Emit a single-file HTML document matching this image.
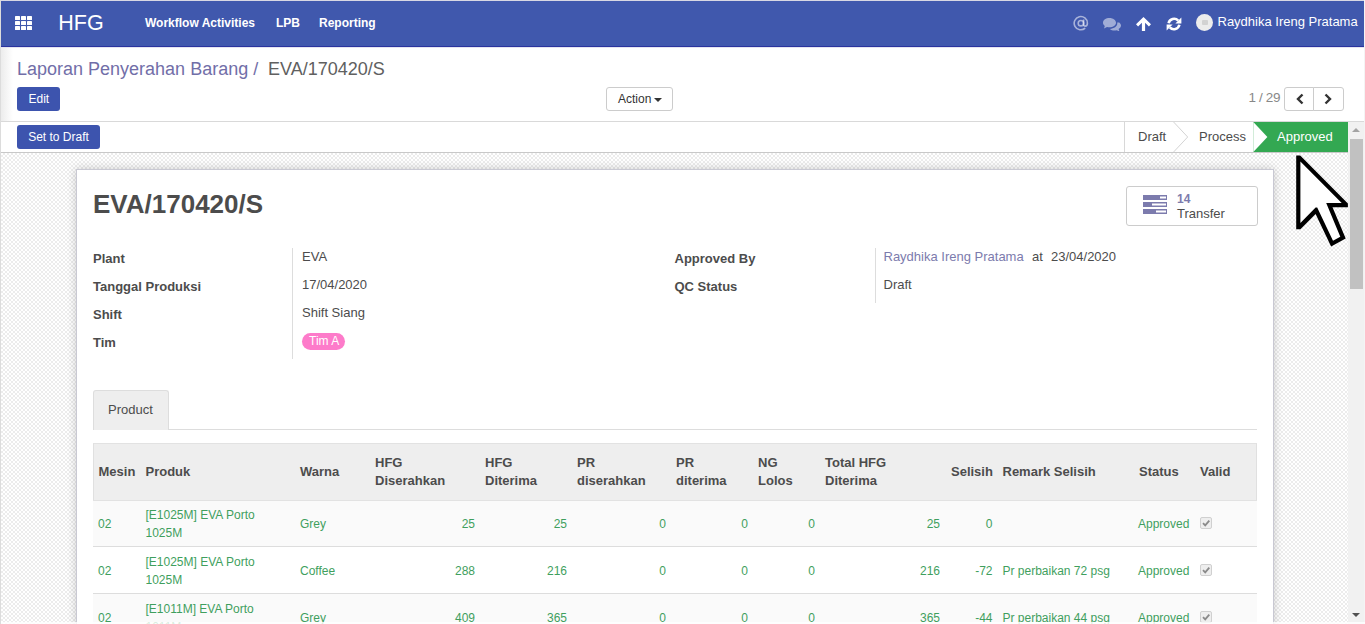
<!DOCTYPE html><html><head><meta charset="utf-8"><style>
*{margin:0;padding:0;box-sizing:border-box}
html,body{width:1365px;height:624px;overflow:hidden;background:#fff;font-family:"Liberation Sans",sans-serif;color:#4c4c4c;position:relative}
.a{position:absolute;white-space:nowrap}
.r{position:absolute}
</style></head><body>
<div class="r" style="left:0;top:0;width:1365px;height:1px;background:#d8d8e4"></div><div class="r" style="left:0;top:0;width:1px;height:624px;background:#dcdcdc"></div><div class="r" style="left:1px;top:1px;width:1363px;height:45px;background:#4058ad"></div><div class="r" style="left:1px;top:46px;width:1363px;height:1px;background:#2a339e"></div><div class="r" style="left:1px;top:47px;width:1363px;height:1px;background:#e4e4f0"></div><svg class="a" style="left:15px;top:16px" width="17" height="14" viewBox="0 0 17 14"><g fill="#fff">
<rect x="0" y="0" width="5" height="4" rx=".6"/><rect x="6" y="0" width="5" height="4" rx=".6"/><rect x="12" y="0" width="5" height="4" rx=".6"/>
<rect x="0" y="5" width="5" height="4" rx=".6"/><rect x="6" y="5" width="5" height="4" rx=".6"/><rect x="12" y="5" width="5" height="4" rx=".6"/>
<rect x="0" y="10" width="5" height="4" rx=".6"/><rect x="6" y="10" width="5" height="4" rx=".6"/><rect x="12" y="10" width="5" height="4" rx=".6"/></g></svg><div class="a" style="left:58.3px;top:12.60px;font-size:21.5px;line-height:21.5px;color:#fff;">HFG</div>
<div class="a" style="left:145px;top:17.34px;font-size:12px;line-height:12px;font-weight:bold;color:#fff;">Workflow Activities</div>
<div class="a" style="left:276px;top:17.34px;font-size:12px;line-height:12px;font-weight:bold;color:#fff;">LPB</div>
<div class="a" style="left:319px;top:17.34px;font-size:12px;line-height:12px;font-weight:bold;color:#fff;">Reporting</div>
<div class="a" style="left:1217.5px;top:14.60px;font-size:13px;line-height:13px;color:#fff;">Raydhika Ireng Pratama</div>
<svg class="a" style="left:1073px;top:15.4px" width="16" height="16" viewBox="0 0 16 16"><g fill="none" stroke="rgba(255,255,255,.55)" stroke-width="1.6">
<path d="M12.2 13.1 A6.6 6.6 0 1 1 14.4 8.2 C14.4 10.2 13.4 11.1 12.3 11.1 C11.2 11.1 10.6 10.4 10.6 9.3 V4.6"/>
<circle cx="7.9" cy="8.2" r="2.7"/></g></svg><svg class="a" style="left:1103px;top:18px" width="18" height="13" viewBox="0 0 18 13"><g fill="rgba(255,255,255,.5)">
<path d="M6.5 0C2.9 0 0 2.1 0 4.7c0 1.3.7 2.4 1.8 3.2L1 10.5l3-1.6c.8.2 1.6.4 2.5.4 3.6 0 6.5-2.1 6.5-4.6S10.1 0 6.5 0z"/>
<path d="M14.2 4.5c.1.3.1.5.1.8 0 3.1-3.3 5.5-7.4 5.6 1.1 1 2.7 1.6 4.6 1.6.7 0 1.4-.1 2-.3l2.9 1.1-.8-2.3c1.4-.8 2.4-2 2.4-3.4 0-1.2-.7-2.3-1.8-3.1z"/></g></svg><svg class="a" style="left:1136px;top:17px" width="15" height="14" viewBox="0 0 15 14"><path fill="#fff" d="M7.5 0L0 7.3l2.1 2.1 3.8-3.7V14h3.2V5.7l3.8 3.7L15 7.3z"/></svg><svg class="a" style="left:1166px;top:17px" width="16" height="14" viewBox="0 0 16 14"><g fill="none" stroke="#fff" stroke-width="2.6">
<path d="M2.6 6.2 A5.6 5.6 0 0 1 12.2 3.6"/><path d="M13.4 7.8 A5.6 5.6 0 0 1 3.8 10.4"/></g>
<g fill="#fff"><path d="M15.4 0.6 V6.6 H9.4 Z"/><path d="M0.6 13.4 V7.4 H6.6 Z"/></g></svg><div class="r" style="left:1196px;top:14px;width:17px;height:17px;border-radius:50%;background:#ececec"></div><div class="r" style="left:1201.5px;top:20px;width:6px;height:5px;border-radius:1px;background:#d2d2d2"></div><div class="r" style="left:1px;top:48px;width:12px;height:73px;background:linear-gradient(90deg,#ececec,#fff)"></div><div class="r" style="left:1px;top:121px;width:1363px;height:1px;background:#d9d9d9"></div><div class="a" style="left:17px;top:60.26px;font-size:18px;line-height:18px;color:#716ea8;">Laporan Penyerahan Barang /</div>
<div class="a" style="left:268px;top:60.26px;font-size:18px;line-height:18px;color:#606060;">EVA/170420/S</div>
<div class="r" style="left:17px;top:87px;width:43px;height:24px;background:#3d54ae;border-radius:3px"></div><div class="a" style="left:-161.2px;width:400px;text-align:center;top:93.14px;font-size:12px;line-height:12px;color:#fff;">Edit</div>
<div class="r" style="left:606px;top:87px;width:67px;height:24px;border:1px solid #ccc;border-radius:3px;background:#fff"></div><div class="a" style="left:618px;top:93.14px;font-size:12px;line-height:12px;color:#333;">Action</div>
<div class="r" style="left:654px;top:98px;width:0;height:0;border-left:4px solid transparent;border-right:4px solid transparent;border-top:4px solid #333"></div><div class="a" style="left:1248.5px;top:90.57px;font-size:13.5px;line-height:13.5px;color:#888;letter-spacing:-0.35px">1 / 29</div>
<div class="r" style="left:1284px;top:87px;width:30px;height:24px;border:1px solid #ccc;border-radius:3px 0 0 3px;background:#fff"></div><div class="r" style="left:1313px;top:87px;width:31px;height:24px;border:1px solid #ccc;border-radius:0 3px 3px 0;background:#fff"></div><svg class="a" style="left:1295px;top:93px" width="10" height="12" viewBox="0 0 10 12"><path d="M7.5 1.5L3 6l4.5 4.5" fill="none" stroke="#333" stroke-width="2.4"/></svg><svg class="a" style="left:1323px;top:93px" width="10" height="12" viewBox="0 0 10 12"><path d="M2.5 1.5L7 6l-4.5 4.5" fill="none" stroke="#333" stroke-width="2.4"/></svg><div class="r" style="left:1px;top:152px;width:1347px;height:1px;background:#c8c8c8"></div><div class="r" style="left:17px;top:125px;width:83px;height:24px;background:#3d54ae;border-radius:3px"></div><div class="a" style="left:-141.5px;width:400px;text-align:center;top:131.14px;font-size:12px;line-height:12px;color:#fff;">Set to Draft</div>
<svg class="a" style="left:1123px;top:122px" width="225" height="30" viewBox="0 0 225 30">
<rect x="130.3" y="0" width="94.7" height="30" fill="#33a852"/>
<path d="M130.3 0 L144.4 15 L130.3 30" fill="#fff"/>
<path d="M1.5 0 V30" stroke="#d8d8d8" stroke-width="1" fill="none"/>
<path d="M50.6 0 L64.7 15 L50.6 30" stroke="#d4d4d4" stroke-width="1" fill="none"/>
</svg><div class="a" style="left:1138px;top:130.00px;font-size:13px;line-height:13px;color:#4c4c4c;">Draft</div>
<div class="a" style="left:1199px;top:130.00px;font-size:13px;line-height:13px;color:#4c4c4c;">Process</div>
<div class="a" style="left:1277px;top:130.00px;font-size:13px;line-height:13px;color:#fff;">Approved</div>
<div class="r" style="left:1px;top:153px;width:1347px;height:471px;background-color:#fff;
background-image:linear-gradient(45deg,#ececec 25%,transparent 25%,transparent 75%,#ececec 75%),linear-gradient(45deg,#ececec 25%,transparent 25%,transparent 75%,#ececec 75%);
background-size:4px 4px;background-position:0 0,2px 2px"></div><div class="r" style="left:76px;top:169px;width:1198px;height:470px;background:#fff;border:1px solid #c9c9d3;box-shadow:0 0 9px rgba(0,0,0,.2)"></div><div class="a" style="left:93px;top:190.99px;font-size:26px;line-height:26px;font-weight:bold;color:#4c4c4c;">EVA/170420/S</div>
<div class="r" style="left:1126px;top:186px;width:132px;height:40px;border:1px solid #ccc;border-radius:3px;background:#fff"></div><svg class="a" style="left:1143px;top:195px" width="25" height="20" viewBox="0 0 25 20"><g fill="#7c7bad">
<rect x="0" y="0" width="24" height="5"/><rect x="0" y="7" width="24" height="5"/><rect x="0" y="14" width="24" height="5"/></g>
<g fill="#fff"><rect x="17" y="1.5" width="6" height="2"/><rect x="9" y="8.5" width="14" height="2"/><rect x="13" y="15.5" width="10" height="2"/></g></svg><div class="a" style="left:1177px;top:193.34px;font-size:12px;line-height:12px;font-weight:bold;color:#7c7bad;">14</div>
<div class="a" style="left:1177px;top:206.80px;font-size:13px;line-height:13px;color:#4c4c4c;">Transfer</div>
<div class="a" style="left:93px;top:252.00px;font-size:13px;line-height:13px;font-weight:bold;color:#4c4c4c;">Plant</div>
<div class="a" style="left:93px;top:280.00px;font-size:13px;line-height:13px;font-weight:bold;color:#4c4c4c;">Tanggal Produksi</div>
<div class="a" style="left:93px;top:308.00px;font-size:13px;line-height:13px;font-weight:bold;color:#4c4c4c;">Shift</div>
<div class="a" style="left:93px;top:336.00px;font-size:13px;line-height:13px;font-weight:bold;color:#4c4c4c;">Tim</div>
<div class="r" style="left:292px;top:248px;width:1px;height:111px;background:#ddd"></div><div class="a" style="left:302px;top:250.00px;font-size:13px;line-height:13px;color:#4c4c4c;">EVA</div>
<div class="a" style="left:302px;top:278.00px;font-size:13px;line-height:13px;color:#4c4c4c;">17/04/2020</div>
<div class="a" style="left:302px;top:306.00px;font-size:13px;line-height:13px;color:#4c4c4c;">Shift Siang</div>
<div class="r" style="left:302px;top:333px;width:43px;height:17px;border-radius:9px;background:#fd7bca"></div><div class="a" style="left:309px;top:334.84px;font-size:12px;line-height:12px;color:#fff;">Tim A</div>
<div class="a" style="left:674.5px;top:251.70px;font-size:13px;line-height:13px;font-weight:bold;color:#4c4c4c;">Approved By</div>
<div class="a" style="left:674.5px;top:279.70px;font-size:13px;line-height:13px;font-weight:bold;color:#4c4c4c;">QC Status</div>
<div class="r" style="left:875px;top:248px;width:1px;height:55px;background:#ddd"></div><div class="a" style="left:883.5px;top:249.70px;font-size:13px;line-height:13px;color:#7c7bad;">Raydhika Ireng Pratama</div>
<div class="a" style="left:1032px;top:249.70px;font-size:13px;line-height:13px;color:#4c4c4c;">at</div>
<div class="a" style="left:1051px;top:249.70px;font-size:13px;line-height:13px;color:#4c4c4c;">23/04/2020</div>
<div class="a" style="left:883.5px;top:277.70px;font-size:13px;line-height:13px;color:#4c4c4c;">Draft</div>
<div class="r" style="left:93px;top:429px;width:1164px;height:1px;background:#ddd"></div><div class="r" style="left:93px;top:390px;width:76px;height:40px;background:#eee;border:1px solid #ddd;border-bottom:none;border-radius:3px 3px 0 0"></div><div class="a" style="left:108px;top:403.00px;font-size:13px;line-height:13px;color:#4c4c4c;">Product</div>
<div class="r" style="left:93px;top:443px;width:1164px;height:57px;background:#eee;border-top:1px solid #e2e2e2;border-left:1px solid #e0e0e0;border-right:1px solid #e0e0e0"></div><div class="a" style="left:98.5px;top:465.00px;font-size:13px;line-height:13px;font-weight:bold;color:#4c4c4c;">Mesin</div>
<div class="a" style="left:145.5px;top:465.00px;font-size:13px;line-height:13px;font-weight:bold;color:#4c4c4c;">Produk</div>
<div class="a" style="left:300px;top:465.00px;font-size:13px;line-height:13px;font-weight:bold;color:#4c4c4c;">Warna</div>
<div class="a" style="left:951px;top:465.00px;font-size:13px;line-height:13px;font-weight:bold;color:#4c4c4c;">Selisih</div>
<div class="a" style="left:1002.5px;top:465.00px;font-size:13px;line-height:13px;font-weight:bold;color:#4c4c4c;">Remark Selisih</div>
<div class="a" style="left:1139px;top:465.00px;font-size:13px;line-height:13px;font-weight:bold;color:#4c4c4c;">Status</div>
<div class="a" style="left:1200px;top:465.00px;font-size:13px;line-height:13px;font-weight:bold;color:#4c4c4c;">Valid</div>
<div class="a" style="left:375px;top:456.00px;font-size:13px;line-height:13px;font-weight:bold;color:#4c4c4c;">HFG</div>
<div class="a" style="left:375px;top:474.00px;font-size:13px;line-height:13px;font-weight:bold;color:#4c4c4c;">Diserahkan</div>
<div class="a" style="left:485px;top:456.00px;font-size:13px;line-height:13px;font-weight:bold;color:#4c4c4c;">HFG</div>
<div class="a" style="left:485px;top:474.00px;font-size:13px;line-height:13px;font-weight:bold;color:#4c4c4c;">Diterima</div>
<div class="a" style="left:577px;top:456.00px;font-size:13px;line-height:13px;font-weight:bold;color:#4c4c4c;">PR</div>
<div class="a" style="left:577px;top:474.00px;font-size:13px;line-height:13px;font-weight:bold;color:#4c4c4c;">diserahkan</div>
<div class="a" style="left:676px;top:456.00px;font-size:13px;line-height:13px;font-weight:bold;color:#4c4c4c;">PR</div>
<div class="a" style="left:676px;top:474.00px;font-size:13px;line-height:13px;font-weight:bold;color:#4c4c4c;">diterima</div>
<div class="a" style="left:758px;top:456.00px;font-size:13px;line-height:13px;font-weight:bold;color:#4c4c4c;">NG</div>
<div class="a" style="left:758px;top:474.00px;font-size:13px;line-height:13px;font-weight:bold;color:#4c4c4c;">Lolos</div>
<div class="a" style="left:825px;top:456.00px;font-size:13px;line-height:13px;font-weight:bold;color:#4c4c4c;">Total HFG</div>
<div class="a" style="left:825px;top:474.00px;font-size:13px;line-height:13px;font-weight:bold;color:#4c4c4c;">Diterima</div>
<div class="r" style="left:93px;top:500px;width:1164px;height:1px;background:#e2e2e2;z-index:1"></div><div class="r" style="left:93px;top:500px;width:1164px;height:47px;background:#fafafa"></div><div class="r" style="left:93px;top:546px;width:1164px;height:1px;background:#ddd"></div><div class="a" style="left:98px;top:517.84px;font-size:12px;line-height:12px;color:#3f9f5e;">02</div>
<div class="a" style="left:145.5px;top:509.34px;font-size:12px;line-height:12px;color:#3f9f5e;">[E1025M] EVA Porto</div>
<div class="a" style="left:145.5px;top:527.34px;font-size:12px;line-height:12px;color:#3f9f5e;">1025M</div>
<div class="a" style="left:300px;top:517.84px;font-size:12px;line-height:12px;color:#3f9f5e;">Grey</div>
<div class="a" style="right:890px;top:517.84px;font-size:12px;line-height:12px;color:#3f9f5e;">25</div>
<div class="a" style="right:798px;top:517.84px;font-size:12px;line-height:12px;color:#3f9f5e;">25</div>
<div class="a" style="right:699px;top:517.84px;font-size:12px;line-height:12px;color:#3f9f5e;">0</div>
<div class="a" style="right:617px;top:517.84px;font-size:12px;line-height:12px;color:#3f9f5e;">0</div>
<div class="a" style="right:550px;top:517.84px;font-size:12px;line-height:12px;color:#3f9f5e;">0</div>
<div class="a" style="right:425px;top:517.84px;font-size:12px;line-height:12px;color:#3f9f5e;">25</div>
<div class="a" style="right:372.5px;top:517.84px;font-size:12px;line-height:12px;color:#3f9f5e;">0</div>
<div class="a" style="left:1138px;top:517.84px;font-size:12px;line-height:12px;color:#3f9f5e;">Approved</div>
<div class="r" style="left:1200px;top:517px;width:12px;height:12px;border:1px solid #d0d0d0;border-radius:2px;background:#eee"></div><svg class="a" style="left:1201px;top:518px" width="10" height="10" viewBox="0 0 10 10"><path d="M2 5.2l2.2 2.2L8.3 2.6" fill="none" stroke="#8a8a8a" stroke-width="1.8"/></svg><div class="r" style="left:93px;top:547px;width:1164px;height:47px;background:#fff"></div><div class="r" style="left:93px;top:593px;width:1164px;height:1px;background:#ddd"></div><div class="a" style="left:98px;top:564.84px;font-size:12px;line-height:12px;color:#3f9f5e;">02</div>
<div class="a" style="left:145.5px;top:556.34px;font-size:12px;line-height:12px;color:#3f9f5e;">[E1025M] EVA Porto</div>
<div class="a" style="left:145.5px;top:574.34px;font-size:12px;line-height:12px;color:#3f9f5e;">1025M</div>
<div class="a" style="left:300px;top:564.84px;font-size:12px;line-height:12px;color:#3f9f5e;">Coffee</div>
<div class="a" style="right:890px;top:564.84px;font-size:12px;line-height:12px;color:#3f9f5e;">288</div>
<div class="a" style="right:798px;top:564.84px;font-size:12px;line-height:12px;color:#3f9f5e;">216</div>
<div class="a" style="right:699px;top:564.84px;font-size:12px;line-height:12px;color:#3f9f5e;">0</div>
<div class="a" style="right:617px;top:564.84px;font-size:12px;line-height:12px;color:#3f9f5e;">0</div>
<div class="a" style="right:550px;top:564.84px;font-size:12px;line-height:12px;color:#3f9f5e;">0</div>
<div class="a" style="right:425px;top:564.84px;font-size:12px;line-height:12px;color:#3f9f5e;">216</div>
<div class="a" style="right:372.5px;top:564.84px;font-size:12px;line-height:12px;color:#3f9f5e;">-72</div>
<div class="a" style="left:1002.5px;top:564.84px;font-size:12px;line-height:12px;color:#3f9f5e;">Pr perbaikan 72 psg</div>
<div class="a" style="left:1138px;top:564.84px;font-size:12px;line-height:12px;color:#3f9f5e;">Approved</div>
<div class="r" style="left:1200px;top:564px;width:12px;height:12px;border:1px solid #d0d0d0;border-radius:2px;background:#eee"></div><svg class="a" style="left:1201px;top:565px" width="10" height="10" viewBox="0 0 10 10"><path d="M2 5.2l2.2 2.2L8.3 2.6" fill="none" stroke="#8a8a8a" stroke-width="1.8"/></svg><div class="r" style="left:93px;top:594px;width:1164px;height:47px;background:#fafafa"></div><div class="r" style="left:93px;top:640px;width:1164px;height:1px;background:#ddd"></div><div class="a" style="left:98px;top:611.84px;font-size:12px;line-height:12px;color:#3f9f5e;">02</div>
<div class="a" style="left:145.5px;top:603.34px;font-size:12px;line-height:12px;color:#3f9f5e;">[E1011M] EVA Porto</div>
<div class="a" style="left:145.5px;top:621.34px;font-size:12px;line-height:12px;color:#3f9f5e;">1011M</div>
<div class="a" style="left:300px;top:611.84px;font-size:12px;line-height:12px;color:#3f9f5e;">Grey</div>
<div class="a" style="right:890px;top:611.84px;font-size:12px;line-height:12px;color:#3f9f5e;">409</div>
<div class="a" style="right:798px;top:611.84px;font-size:12px;line-height:12px;color:#3f9f5e;">365</div>
<div class="a" style="right:699px;top:611.84px;font-size:12px;line-height:12px;color:#3f9f5e;">0</div>
<div class="a" style="right:617px;top:611.84px;font-size:12px;line-height:12px;color:#3f9f5e;">0</div>
<div class="a" style="right:550px;top:611.84px;font-size:12px;line-height:12px;color:#3f9f5e;">0</div>
<div class="a" style="right:425px;top:611.84px;font-size:12px;line-height:12px;color:#3f9f5e;">365</div>
<div class="a" style="right:372.5px;top:611.84px;font-size:12px;line-height:12px;color:#3f9f5e;">-44</div>
<div class="a" style="left:1002.5px;top:611.84px;font-size:12px;line-height:12px;color:#3f9f5e;">Pr perbaikan 44 psg</div>
<div class="a" style="left:1138px;top:611.84px;font-size:12px;line-height:12px;color:#3f9f5e;">Approved</div>
<div class="r" style="left:1200px;top:611px;width:12px;height:12px;border:1px solid #d0d0d0;border-radius:2px;background:#eee"></div><svg class="a" style="left:1201px;top:612px" width="10" height="10" viewBox="0 0 10 10"><path d="M2 5.2l2.2 2.2L8.3 2.6" fill="none" stroke="#8a8a8a" stroke-width="1.8"/></svg><div class="r" style="left:1348px;top:122px;width:16px;height:502px;background:#f1f1f1"></div><div class="r" style="left:1350px;top:139px;width:13px;height:150px;background:#c1c1c1"></div><div class="r" style="left:1352px;top:128px;width:0;height:0;border-left:4px solid transparent;border-right:4px solid transparent;border-bottom:4px solid #a3a3a3"></div><div class="r" style="left:1352px;top:613px;width:0;height:0;border-left:4px solid transparent;border-right:4px solid transparent;border-top:4px solid #505050"></div><div class="r" style="left:1364px;top:0;width:1px;height:624px;background:#f4f4f4"></div><div class="r" style="left:1px;top:622px;width:1364px;height:2px;background:rgba(255,255,255,.8)"></div><svg class="a" style="left:1290px;top:150px" width="65" height="100" viewBox="0 0 65 100">
<path d="M6.2 5.4 L10.2 5.4 L57.9 53.4 L57.9 57.3 L42.5 57.3 L55.7 88.6 L41.1 96.5 L25.6 64.0 L10.4 79.2 L6.2 79.2 Z" fill="#000"/>
<path d="M10.4 11.6 L51.7 53.1 L36.2 53.1 L50.3 86.7 L43.0 90.7 L27.2 57.4 L25.6 57.4 L10.4 73.0 Z" fill="#fff"/>
</svg></body></html>
